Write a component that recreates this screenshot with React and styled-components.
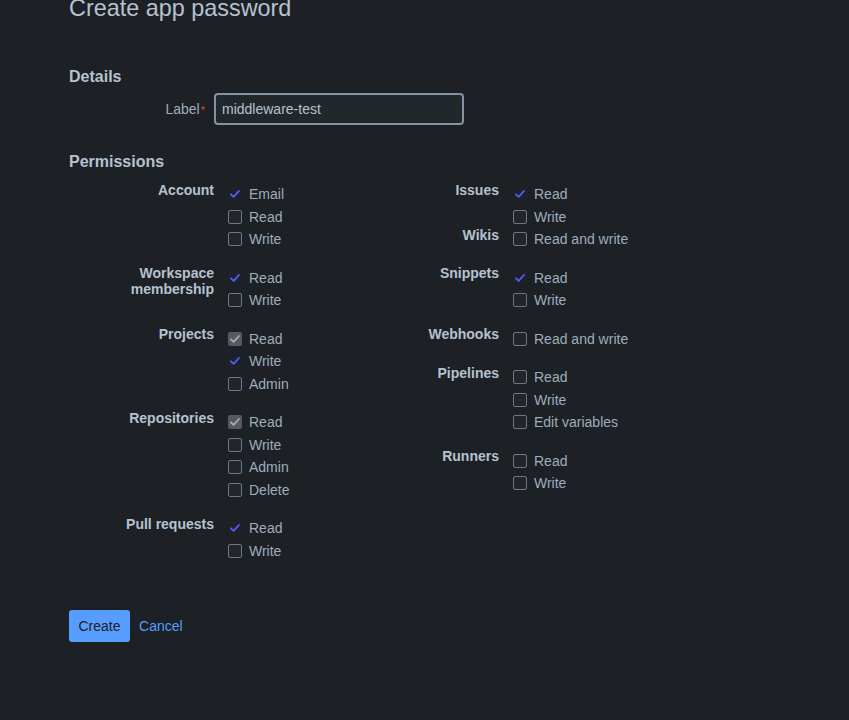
import React from 'react';
import styled, { createGlobalStyle } from 'styled-components';

const GlobalStyle = createGlobalStyle`
  html, body {
    margin: 0;
    padding: 0;
    background: #1d2025;
  }
  body {
    font-family: "Liberation Sans", Arial, sans-serif;
    color: #b6c2cf;
    height: 720px;
    overflow: hidden;
  }
`;

const Page = styled.div`
  padding: 0 0 0 69px;
  margin-top: -6px;
`;

const Title = styled.h1`
  margin: 0;
  font-size: 23.4px;
  line-height: 28px;
  font-weight: 400;
  color: #b6c2cf;
`;

const Heading = styled.h2`
  margin: ${(p) => p.$top}px 0 0;
  font-size: 16px;
  line-height: 20px;
  font-weight: 700;
  color: #b6c2cf;
`;

const FieldRow = styled.div`
  display: grid;
  grid-template-columns: 136px 250px;
  column-gap: 9px;
  align-items: center;
  margin-top: 6px;
`;

const FieldLabel = styled.label`
  text-align: right;
  font-size: 14px;
  color: #9fadbc;
`;

const Required = styled.span`
  color: #e2483d;
  font-size: 11px;
  margin-left: 1px;
`;

const TextInput = styled.input`
  box-sizing: border-box;
  width: 250px;
  height: 32px;
  padding: 0 6px;
  border: 2px solid #8592a3;
  border-radius: 4px;
  background: #22272b;
  color: #b6c2cf;
  font-family: inherit;
  font-size: 14px;
  outline: none;
`;

const Columns = styled.div`
  display: grid;
  grid-template-columns: 285px 285px;
  align-items: start;
  margin-top: 11px;
`;

const Column = styled.div`
  display: flex;
  flex-direction: column;
  gap: 16px;
`;

const Group = styled.div`
  display: flex;
  flex-direction: column;
`;

const Section = styled.div`
  display: grid;
  grid-template-columns: 145px auto;
  column-gap: 14px;
  align-items: start;
`;

const SectionLabel = styled.div`
  text-align: right;
  font-size: 14px;
  line-height: 16px;
  font-weight: 700;
  color: #b6c2cf;
  margin-top: -1.5px;
`;

const Items = styled.div`
  display: flex;
  flex-direction: column;
`;

const Item = styled.label`
  display: flex;
  align-items: center;
  gap: 7px;
  height: 22.5px;
  font-size: 14px;
  color: #9fadbc;
`;

const Box = styled.span`
  box-sizing: border-box;
  width: 14px;
  height: 14px;
  border-radius: 2px;
  display: flex;
  align-items: center;
  justify-content: center;
  flex: none;
  border: ${(p) => (p.$state === 'off' ? '1px solid #6e7884' : 'none')};
  background: ${(p) =>
    p.$state === 'locked' ? '#56595f' : p.$state === 'on' ? '#1f2029' : '#22252b'};
`;

const Actions = styled.div`
  display: flex;
  align-items: center;
  gap: 9px;
  margin-top: 48px;
`;

const Button = styled.button`
  height: 32px;
  padding: 0 9.5px;
  border: none;
  border-radius: 3px;
  background: #579dff;
  color: #1d2125;
  font-family: inherit;
  font-size: 14px;
`;

const LinkButton = styled.a`
  color: #579dff;
  font-size: 14px;
  text-decoration: none;
  margin-top: -1px;
`;

const Check = ({ color }) => (
  <svg width="12" height="12" viewBox="0 0 12 12">
    <path d="M2 6.3 L4.6 8.8 L10 3" fill="none" stroke={color} strokeWidth="1.8" strokeLinecap="round" strokeLinejoin="round" />
  </svg>
);

const Checkbox = ({ state, label }) => (
  <Item>
    <Box $state={state}>
      {state === 'on' && <Check color="#5064f2" />}
      {state === 'locked' && <Check color="#a9adb3" />}
    </Box>
    {label}
  </Item>
);

const left = [
  [{ label: 'Account', items: [['Email', 'on'], ['Read', 'off'], ['Write', 'off']] }],
  [{ label: ['Workspace', 'membership'], items: [['Read', 'on'], ['Write', 'off']] }],
  [{ label: 'Projects', items: [['Read', 'locked'], ['Write', 'on'], ['Admin', 'off']] }],
  [{ label: 'Repositories', items: [['Read', 'locked'], ['Write', 'off'], ['Admin', 'off'], ['Delete', 'off']] }],
  [{ label: 'Pull requests', items: [['Read', 'on'], ['Write', 'off']] }],
];

const right = [
  [
    { label: 'Issues', items: [['Read', 'on'], ['Write', 'off']] },
    { label: 'Wikis', items: [['Read and write', 'off']] },
  ],
  [{ label: 'Snippets', items: [['Read', 'on'], ['Write', 'off']] }],
  [{ label: 'Webhooks', items: [['Read and write', 'off']] }],
  [{ label: 'Pipelines', items: [['Read', 'off'], ['Write', 'off'], ['Edit variables', 'off']] }],
  [{ label: 'Runners', items: [['Read', 'off'], ['Write', 'off']] }],
];

const PermissionColumn = ({ groups }) => (
  <Column>
    {groups.map((group, gi) => (
      <Group key={gi}>
        {group.map((sec, si) => (
          <Section key={si}>
            <SectionLabel>
              {Array.isArray(sec.label)
                ? sec.label.map((l) => <div key={l}>{l}</div>)
                : sec.label}
            </SectionLabel>
            <Items>
              {sec.items.map(([name, state], ii) => (
                <Checkbox key={ii} label={name} state={state} />
              ))}
            </Items>
          </Section>
        ))}
      </Group>
    ))}
  </Column>
);

export default function App() {
  return (
    <>
      <GlobalStyle />
      <Page>
        <Title>Create app password</Title>
        <Heading $top={45}>Details</Heading>
        <FieldRow>
          <FieldLabel>
            Label<Required>*</Required>
          </FieldLabel>
          <TextInput defaultValue="middleware-test" />
        </FieldRow>
        <Heading $top={27}>Permissions</Heading>
        <Columns>
          <PermissionColumn groups={left} />
          <PermissionColumn groups={right} />
        </Columns>
        <Actions>
          <Button>Create</Button>
          <LinkButton href="#">Cancel</LinkButton>
        </Actions>
      </Page>
    </>
  );
}
